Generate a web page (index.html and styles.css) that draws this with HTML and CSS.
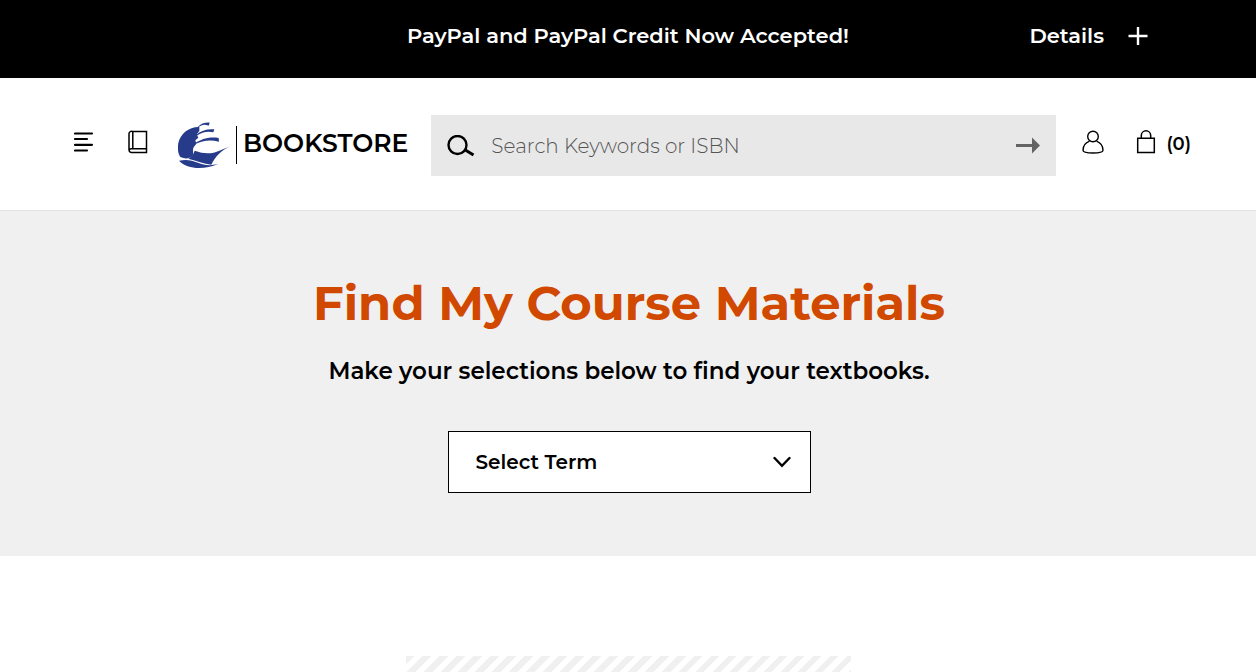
FILE: index.html
```html
<!DOCTYPE html>
<html lang="en">
<head>
    <meta charset="UTF-8">
    <meta name="viewport" content="width=device-width, initial-scale=1.0">
    <title>Bookstore - Find My Course Materials</title>
    <link rel="stylesheet" href="styles.css">
</head>
<body>
    <div class="promo">
        <p class="promo-text">PayPal and PayPal Credit Now Accepted!</p>
        <button type="button" class="promo-details">
            Details
            <svg width="20" height="20" viewBox="0 0 20 20" aria-hidden="true">
                <path d="M10 1v18M.5 10h19" fill="none" stroke="#fff" stroke-width="2.400"/>
            </svg>
        </button>
    </div>

    <header class="header">
        <button type="button" class="icon-btn" aria-label="Menu">
            <svg width="20" height="22" viewBox="0 0 20 22" aria-hidden="true">
                <path d="M1 2.500h17M1 8h12M1 13.800h17M1 19.500h12" fill="none" stroke="#000" stroke-width="2.200" stroke-linecap="round"/>
            </svg>
        </button>
        <a href="#" class="icon-link book-link" aria-label="Textbooks">
            <svg width="20" height="24" viewBox="0 0 20 24" aria-hidden="true">
                <path d="M4.500 1.500h14v21H3.500a2.500 2.500 0 0 1-2.500-2.500V4a2.500 2.500 0 0 1 3.500-2.500zM4.800 1.500v17.300M18.500 18.800H3.800A2.500 2.500 0 0 0 1 20.500" fill="none" stroke="#000" stroke-width="1.500"/>
            </svg>
        </a>
        <a href="#" class="logo">
            <svg width="53" height="46" viewBox="11 11 159 138" aria-hidden="true">
                <g fill="#263c8b">
                    <path d="M75 26C44 25 18 46 12 74c-3 17-1 32 6 42 14 6 25 6 36-2 4-7 2-13 2-20 0-8 6-12 10-18l-3-10 9-8-5-10 8-10z"/>
                    <path d="M70 26c10-10 22-14 36-13l-3 9c-11-5-21-4-31 5z"/>
                    <path d="M64 50c16-13 34-19 56-17l-3 9c-17-4-33-1-50 10z"/>
                    <path d="M56 79c23-17 49-25 77-20l1 11c-27-7-48-4-73 8z"/>
                    <path d="M42 121c9-5 16-13 19-24 25 9 47 10 66 3 17-6 29-11 42-16-28 12-45 29-58 55-23-3-43-11-69-18z"/>
                    <path d="M14 127c22-5 39-1 57 6 18 8 37 10 60 4-40 17-92 17-117-10z"/>
                </g>
            </svg>
            <span class="logo-text">BOOKSTORE</span>
        </a>
        <form class="search" role="search">
            <label for="search" class="search-icon" aria-label="Search">
                <svg width="28" height="22" viewBox="0 0 28 22" aria-hidden="true">
                    <circle cx="10.500" cy="10" r="9" fill="none" stroke="#000" stroke-width="2.400"/>
                    <path d="M17.500 14.500l9 5.500" fill="none" stroke="#000" stroke-width="3"/>
                </svg>
            </label>
            <input type="text" id="search" name="search" placeholder="Search Keywords or ISBN">
            <button type="submit" class="search-btn" aria-label="Submit search">
                <svg width="24" height="18" viewBox="0 0 24 18" aria-hidden="true">
                    <path d="M0 7h16V.5l8 8-8 8V10H0z" fill="#636363"/>
                </svg>
            </button>
        </form>
        <a href="#" class="icon-link" aria-label="My account">
            <svg width="22" height="24" viewBox="0 0 22 24" aria-hidden="true">
                <g fill="none" stroke="#000" stroke-width="1.400">
                    <circle cx="11" cy="6.500" r="5.300"/>
                    <path d="M7.500 11.200C3.800 12.700 1 16 1 20.300c0 1.700 4 2.700 10 2.700s10-1 10-2.700c0-4.300-2.800-7.600-6.500-9.100"/>
                </g>
            </svg>
        </a>
        <a href="#" class="icon-link bag" aria-label="Shopping bag">
            <svg width="20" height="24" viewBox="0 0 20 24" aria-hidden="true">
                <path d="M1.700 8.300h16.600V22.500H1.700zM5.300 8V5.500a4.700 4.700 0 0 1 9.400 0V8" fill="none" stroke="#000" stroke-width="1.500"/>
            </svg>
            <span class="bag-count">(0)</span>
        </a>
    </header>

    <main>
        <section class="finder">
            <h1>Find My Course Materials</h1>
            <p>Make your selections below to find your textbooks.</p>
            <div class="select-wrap">
                <select id="term" name="term" aria-label="Select Term">
                    <option>Select Term</option>
                </select>
                <svg class="chevron" width="18" height="12" viewBox="0 0 18 12" aria-hidden="true">
                    <path d="M1.500 2L9 9.800 16.500 2" fill="none" stroke="#000" stroke-width="2.400" stroke-linecap="round"/>
                </svg>
            </div>
        </section>
        <div class="stripes"></div>
    </main>
</body>
</html>
```
FILE: styles.css
```css
* {
    box-sizing: border-box;
}
body {
    margin: 0;
    background-color: #fff;
    color: #000;
    font-family: Montserrat, Inter, sans-serif;
    font-weight: 600;
}
button {
    border: none;
    background: none;
    padding: 0;
    color: inherit;
    font: inherit;
    cursor: pointer;
}
a {
    color: inherit;
    text-decoration: none;
}
svg {
    display: block;
    flex-shrink: 0;
}

/* Promo bar */
.promo {
    display: grid;
    grid-template-columns: 1fr auto 1fr;
    align-items: center;
    background-color: #000;
    color: #fff;
    padding: 20px 108px 26px;
    line-height: 32px;
}
.promo-text {
    grid-column: 2;
    margin: 0;
    font-size: 21px;
}
.promo-details {
    display: flex;
    align-items: center;
    justify-self: end;
    gap: 24px;
    font-size: 21px;
}

/* Header */
.header {
    display: flex;
    align-items: center;
    padding: 37px 65px 34px 74px;
    border-bottom: 1px solid #e4e4e4;
}
.icon-btn,
.icon-link {
    padding-bottom: 8px;
}
.book-link {
    margin: 0 30px 0 34px;
}
.logo {
    display: flex;
    align-items: center;
    gap: 5px;
    padding-bottom: 2px;
}
.logo-text {
    border-left: 1px solid #000;
    padding: 0 0 4px 6px;
    font-size: 25px;
    line-height: 34px;
}
.search {
    display: flex;
    flex: 1;
    align-items: center;
    min-width: 0;
    height: 61px;
    margin: 0 26px 0 23px;
    padding: 0 16px;
    background-color: #e8e8e8;
}
.search input {
    flex: 1;
    min-width: 0;
    margin: 0 16px;
    padding: 0;
    border: none;
    outline: none;
    background: none;
    font-family: inherit;
    font-size: 20px;
    font-weight: 300;
}
.search input::placeholder {
    color: #555;
    opacity: 1;
}
.bag {
    display: flex;
    align-items: center;
    gap: 10px;
    margin-left: 32px;
    font-size: 18px;
}
.bag-count {
    padding-top: 4px;
}

/* Course finder */
.finder {
    display: flex;
    flex-direction: column;
    align-items: center;
    padding: 60px 20px 63px 22px;
    background-color: #f0f0f0;
    text-align: center;
}
.finder h1 {
    margin: 0;
    color: #d14900;
    font-size: 48px;
    font-weight: 700;
    line-height: 64px;
}
.finder p {
    margin: 20px 0 44px;
    font-size: 23px;
    line-height: 32px;
}
.select-wrap {
    position: relative;
    width: 363px;
    max-width: 100%;
}
.select-wrap select {
    appearance: none;
    width: 100%;
    height: 62px;
    padding: 0 27px;
    border: 1px solid #000;
    border-radius: 0;
    background-color: #fff;
    color: #000;
    font-family: inherit;
    font-size: 20px;
    font-weight: 600;
}
.chevron {
    position: absolute;
    top: 25px;
    right: 20px;
    pointer-events: none;
}

.stripes {
    width: 445px;
    max-width: 100%;
    height: 16px;
    margin: 100px auto 0;
    background: repeating-linear-gradient(135deg, #f0f0f0 0 6px, #fff 6px 12px);
}
```
